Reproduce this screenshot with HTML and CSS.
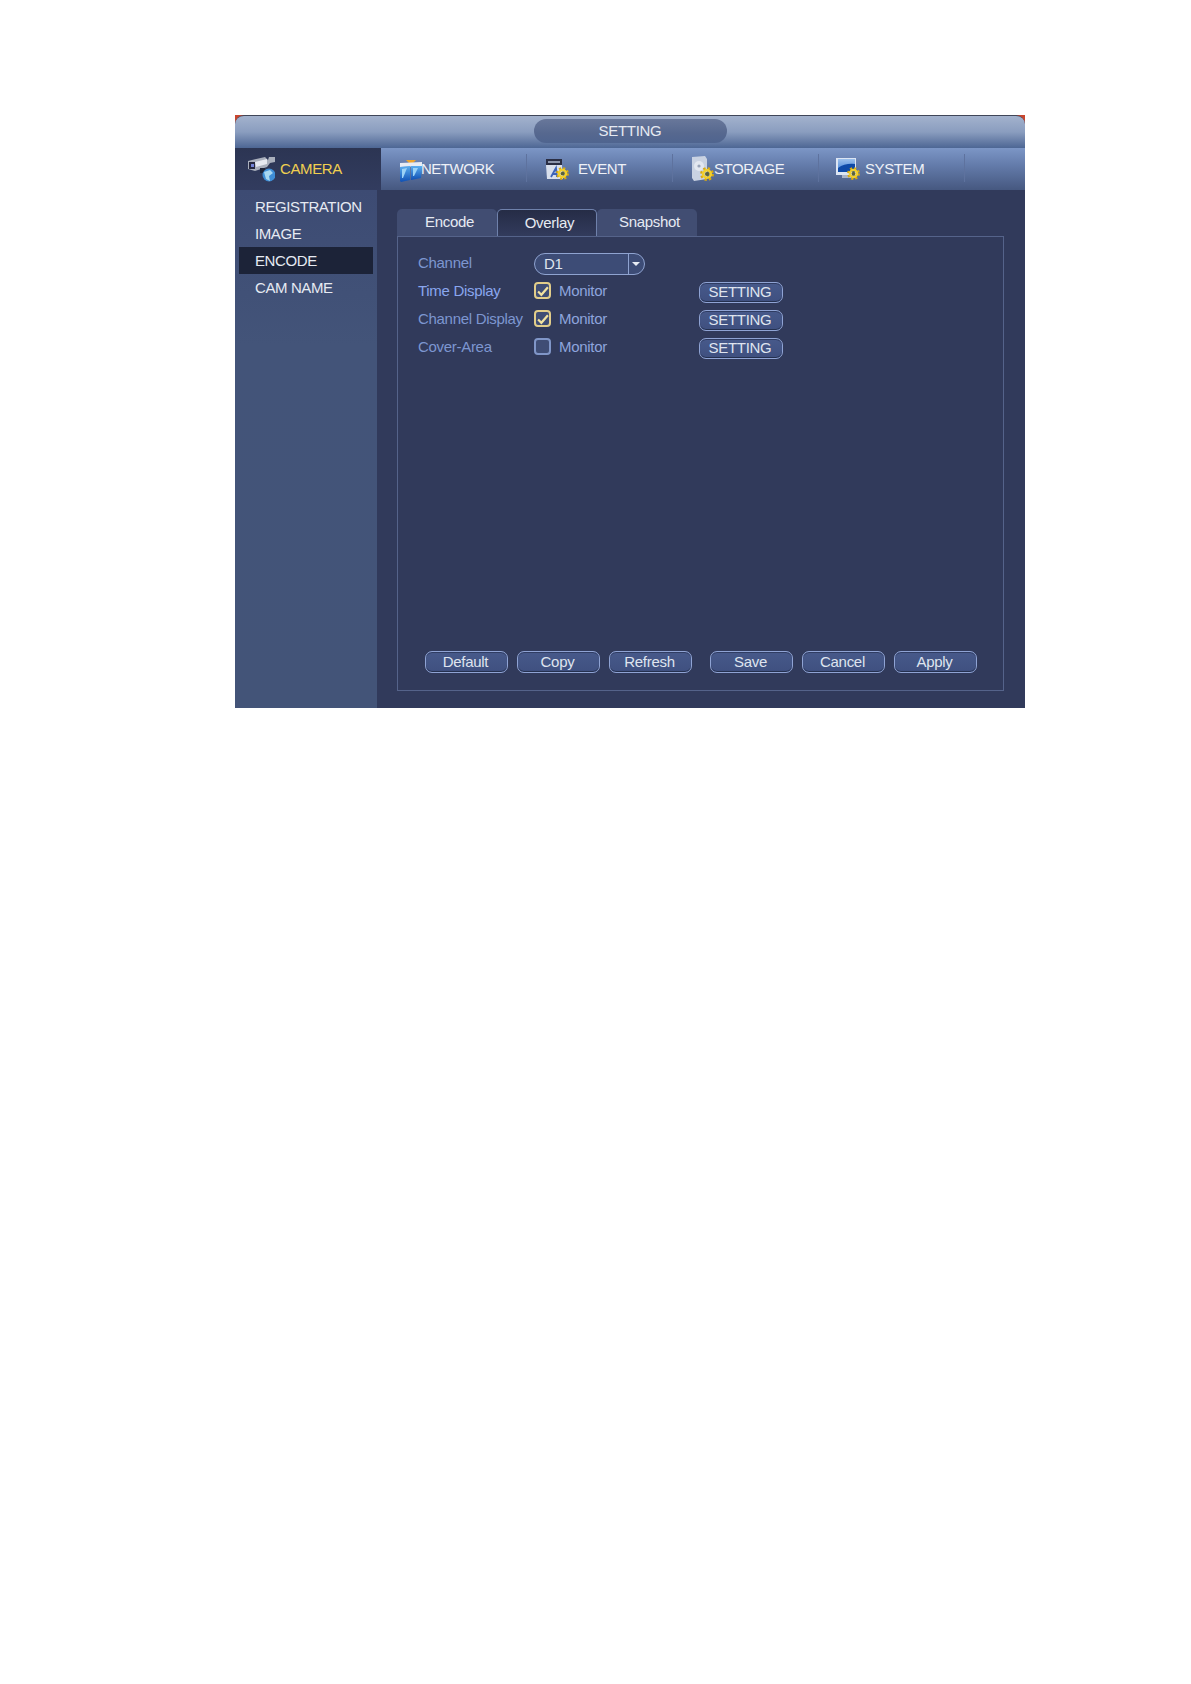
FILE: index.html
```html
<!DOCTYPE html>
<html lang="en">
<head>
    <meta charset="UTF-8">
    <title>SETTING</title>
    <link rel="stylesheet" href="styles.css">
</head>
<body>
<svg class="defs" width="0" height="0">
    <defs>
        <linearGradient id="blueFill" x1="0" y1="0" x2="0" y2="1">
            <stop offset="0" stop-color="#5aaef0"/>
            <stop offset="1" stop-color="#0f50b4"/>
        </linearGradient>
        <linearGradient id="screenFill" x1="0" y1="0" x2="0" y2="1">
            <stop offset="0" stop-color="#9cc0ec"/>
            <stop offset="1" stop-color="#3f7fd8"/>
        </linearGradient>
        <symbol id="gear" viewBox="0 0 14 14">
            <circle cx="7" cy="7" r="5.6" fill="none" stroke="#d9ab12" stroke-width="2.6" stroke-dasharray="2.3 2.1"/>
            <circle cx="7" cy="7" r="3.8" fill="none" stroke="#f2d02c" stroke-width="2.6"/>
            <circle cx="7" cy="7" r="2" fill="#5b6238"/>
        </symbol>
    </defs>
</svg>
<div class="window">
    <div class="titlebar">
        <div class="title-pill">SETTING</div>
    </div>
    <div class="nav">
        <div class="nav-item camera">
            <svg class="nav-icon" width="27" height="26" viewBox="0 0 27 26">
                <polygon points="0,5 17,1 20,4 21,1 27,1 27,6 22,7 19,11 7,15 0,13" fill="#a9afbc"/>
                <polygon points="7,6 19,3 19,8 8,11" fill="#e6e9f0"/>
                <rect x="1" y="6" width="6" height="7" fill="#262840"/>
                <rect x="3" y="8" width="3" height="3" fill="#7484d8"/>
                <rect x="12" y="12" width="5" height="5" fill="#1e2438"/>
                <circle cx="21" cy="19" r="6.5" fill="#3f8ed6"/>
                <path d="M16 16 L22 14 L25 17 L21 20 L22 25 L18 23 Z" fill="#a8d8f2"/>
            </svg>
            <span>CAMERA</span>
        </div>
        <div class="nav-item network">
            <svg class="nav-icon" width="22" height="26" viewBox="0 0 22 26">
                <polygon points="6,4 16,4 12,8 10,8" fill="#eca52e"/>
                <polygon points="0,7 22,6 22,10 0,11" fill="#e6ebf4"/>
                <polygon points="0,11 10,10 10,24 1,26 0,25" fill="url(#blueFill)"/>
                <polygon points="11,10 22,10 21,22 11,24" fill="url(#blueFill)"/>
                <polygon points="2,13 7,12 3,22 2,22" fill="#9ad2f6"/>
                <polygon points="13,12 18,12 14,20 13,20" fill="#9ad2f6"/>
            </svg>
            <span>NETWORK</span>
        </div>
        <div class="nav-item event">
            <svg class="nav-icon" width="24" height="26" viewBox="0 0 24 26">
                <rect x="1" y="3" width="16" height="6" fill="#2a2e44"/>
                <rect x="3" y="5" width="12" height="2" fill="#8d96ac"/>
                <polygon points="1,9 17,9 18,23 2,23" fill="#d8dfec"/>
                <path d="M6 21 L11 12 L12 21 M8 18 H12" stroke="#3b63b8" stroke-width="1.8" fill="none"/>
                <use href="#gear" x="11" y="11" width="13" height="13"/>
            </svg>
            <span>EVENT</span>
        </div>
        <div class="nav-item storage">
            <svg class="nav-icon" width="22" height="26" viewBox="0 0 22 26">
                <polygon points="0,1 13,0 15,3 15,23 2,25 0,22" fill="#c9d2e2"/>
                <circle cx="7" cy="10" r="5" fill="#e2e7f0"/>
                <circle cx="7" cy="10" r="1.6" fill="#98a3b8"/>
                <use href="#gear" x="8" y="11" width="14" height="14"/>
            </svg>
            <span>STORAGE</span>
        </div>
        <div class="nav-item system">
            <svg class="nav-icon" width="24" height="26" viewBox="0 0 24 26">
                <rect x="0" y="2" width="20" height="17" fill="#dce5f3"/>
                <rect x="2" y="3" width="17" height="13" fill="url(#screenFill)"/>
                <path d="M2 12 Q9 7 19 8 V16 H2 Z" fill="#0e4aa8"/>
                <rect x="6" y="19" width="9" height="3" fill="#aab4c8"/>
                <use href="#gear" x="11" y="11" width="13" height="13"/>
            </svg>
            <span>SYSTEM</span>
        </div>
    </div>
    <div class="main">
        <ul class="sidebar">
            <li>REGISTRATION</li>
            <li>IMAGE</li>
            <li class="selected">ENCODE</li>
            <li>CAM NAME</li>
        </ul>
        <div class="content">
            <div class="tabs">
                <div class="tab">Encode</div>
                <div class="tab active">Overlay</div>
                <div class="tab">Snapshot</div>
            </div>
            <div class="panel">
                <div class="row">
                    <span class="label">Channel</span>
                    <div class="combo">
                        <span class="combo-value">D1</span>
                        <span class="combo-arrow"></span>
                    </div>
                </div>
                <div class="row">
                    <span class="label bright">Time Display</span>
                    <label class="check on">
                        <svg width="12" height="12" viewBox="0 0 11 11"><path d="M1 6 L4 9 L10 2" fill="none" stroke="#f2e2a0" stroke-width="2"/></svg>
                    </label>
                    <span class="monitor">Monitor</span>
                    <button class="btn btn-setting">SETTING</button>
                </div>
                <div class="row">
                    <span class="label">Channel Display</span>
                    <label class="check on">
                        <svg width="12" height="12" viewBox="0 0 11 11"><path d="M1 6 L4 9 L10 2" fill="none" stroke="#f2e2a0" stroke-width="2"/></svg>
                    </label>
                    <span class="monitor">Monitor</span>
                    <button class="btn btn-setting">SETTING</button>
                </div>
                <div class="row">
                    <span class="label">Cover-Area</span>
                    <label class="check"></label>
                    <span class="monitor">Monitor</span>
                    <button class="btn btn-setting">SETTING</button>
                </div>
                <div class="actions">
                    <button class="btn">Default</button>
                    <button class="btn">Copy</button>
                    <button class="btn">Refresh</button>
                    <button class="btn save">Save</button>
                    <button class="btn">Cancel</button>
                    <button class="btn">Apply</button>
                </div>
            </div>
        </div>
    </div>
</div>
</body>
</html>
```

FILE: styles.css
```css
*{
    margin: 0;
    padding: 0;
    box-sizing: border-box;
}
html,body{
    background: #fff;
}
body{
    height: 1684px;
    overflow: hidden;
    font-family: "Liberation Sans", Arial, sans-serif;
    font-size: 15px;
    letter-spacing: -0.3px;
    color: #dfe4ef;
}
.defs{
    display: block;
    height: 0;
}
.window{
    width: 790px;
    height: 593px;
    margin: 115px 0 0 235px;
    display: flex;
    flex-direction: column;
    background: linear-gradient(#c8452e 0, #c8452e 10px, #313a5b 10px);
}
.titlebar{
    height: 33px;
    flex: none;
    display: flex;
    justify-content: center;
    padding-top: 3px;
    border-top: 1px solid #3f4658;
    border-radius: 9px 9px 0 0;
    background: linear-gradient(#a3b2cd, #8a9dbf 50%, #4d6694);
}
.title-pill{
    width: 193px;
    height: 24px;
    line-height: 24px;
    text-align: center;
    border-radius: 12px;
    background: linear-gradient(#68779a, #56688f 60%, #4f648f);
    color: #e6eaf2;
}
.nav{
    height: 42px;
    flex: none;
    display: flex;
    background: linear-gradient(#7c96c6, #647cab 40%, #465880);
}
.nav-item{
    width: 146px;
    display: flex;
    align-items: center;
    position: relative;
    letter-spacing: -0.4px;
    color: #eef1f7;
}
.nav-item>span{
    margin-bottom: 2px;
}
.nav-item::after{
    content: "";
    position: absolute;
    right: 0;
    top: 6px;
    bottom: 8px;
    width: 1px;
    background: #5e729e;
}
.nav-item.camera{
    background: linear-gradient(#2c3553, #323c5f);
    color: #f0cf50;
    padding-left: 13px;
}
.nav-item.camera::after{
    display: none;
}
.camera .nav-icon{
    margin-right: 5px;
}
.network{
    padding-left: 19px;
    letter-spacing: -0.5px;
}
.network .nav-icon{
    margin-right: -1px;
}
.event{
    padding-left: 18px;
}
.event .nav-icon{
    margin-right: 9px;
}
.storage{
    padding-left: 19px;
}
.system{
    padding-left: 17px;
}
.system .nav-icon{
    margin-right: 5px;
}
.main{
    flex: 1;
    display: flex;
    background: #313a5b;
}
.sidebar{
    width: 142px;
    flex: none;
    list-style: none;
    padding: 3px 4px 0;
    background: linear-gradient(#3d4b73, #435479 30%, #435478);
}
.sidebar>li{
    height: 27px;
    line-height: 27px;
    padding-left: 16px;
    letter-spacing: -0.4px;
    color: #e6eaf2;
}
.sidebar .selected{
    background: #1c2338;
}
.content{
    flex: 1;
    display: flex;
    flex-direction: column;
    padding: 19px 21px 17px 20px;
}
.tabs{
    display: flex;
    height: 27px;
    flex: none;
}
.tab{
    width: 100px;
    height: 27px;
    line-height: 26px;
    text-align: center;
    padding-left: 5px;
    border-radius: 5px 5px 0 0;
    background: #414d72;
    color: #e6eaf2;
}
.tab.active{
    background: linear-gradient(#252c46, #323b5c);
    border: 1px solid #6f81ab;
    border-bottom: 0;
    line-height: 25px;
}
.panel{
    flex: 1;
    display: flex;
    flex-direction: column;
    padding: 13px 26px 17px 20px;
    margin-right: 2px;
    border: 1px solid #55638a;
}
.row{
    height: 28px;
    flex: none;
    display: flex;
    align-items: center;
}
.label{
    width: 116px;
    flex: none;
    margin-bottom: 3px;
    color: #7d96d0;
}
.label.bright{
    color: #8aa6ee;
}
.combo{
    width: 111px;
    height: 22px;
    display: flex;
    align-items: stretch;
    border: 1px solid #8fa3d0;
    border-radius: 11px;
    background: #3d4c76;
}
.combo-value{
    flex: 1;
    line-height: 20px;
    padding-left: 9px;
    color: #dfe4ef;
}
.combo-arrow{
    width: 16px;
    border-left: 1px solid #8fa3d0;
    position: relative;
}
.combo-arrow::after{
    content: "";
    position: absolute;
    left: 3px;
    top: 8px;
    border: 4px solid transparent;
    border-top: 4px solid #e8ecf4;
}
.check{
    width: 17px;
    height: 17px;
    flex: none;
    display: flex;
    align-items: center;
    justify-content: center;
    margin-bottom: 3px;
    border: 2px solid #8096c8;
    border-radius: 4px;
    background: #3f4d75;
}
.check.on{
    border-color: #e2cd8a;
}
.monitor{
    width: 140px;
    flex: none;
    margin: 0 0 3px 8px;
    color: #8ea4dd;
}
.btn{
    width: 83px;
    height: 22px;
    padding: 0 2px 2px 0;
    font: inherit;
    letter-spacing: inherit;
    color: #dfe4ef;
    border: 1px solid #8fa3d4;
    border-radius: 7px;
    background: linear-gradient(#47598a, #3f5080);
    box-shadow: inset 0 -1px 0 #24304f, inset 0 1px 0 #2f3c62;
}
.btn-setting{
    width: 84px;
    height: 21px;
}
.actions{
    margin-top: auto;
    display: flex;
    gap: 9px;
    padding-left: 7px;
}
.actions .save{
    margin-left: 9px;
}
```
